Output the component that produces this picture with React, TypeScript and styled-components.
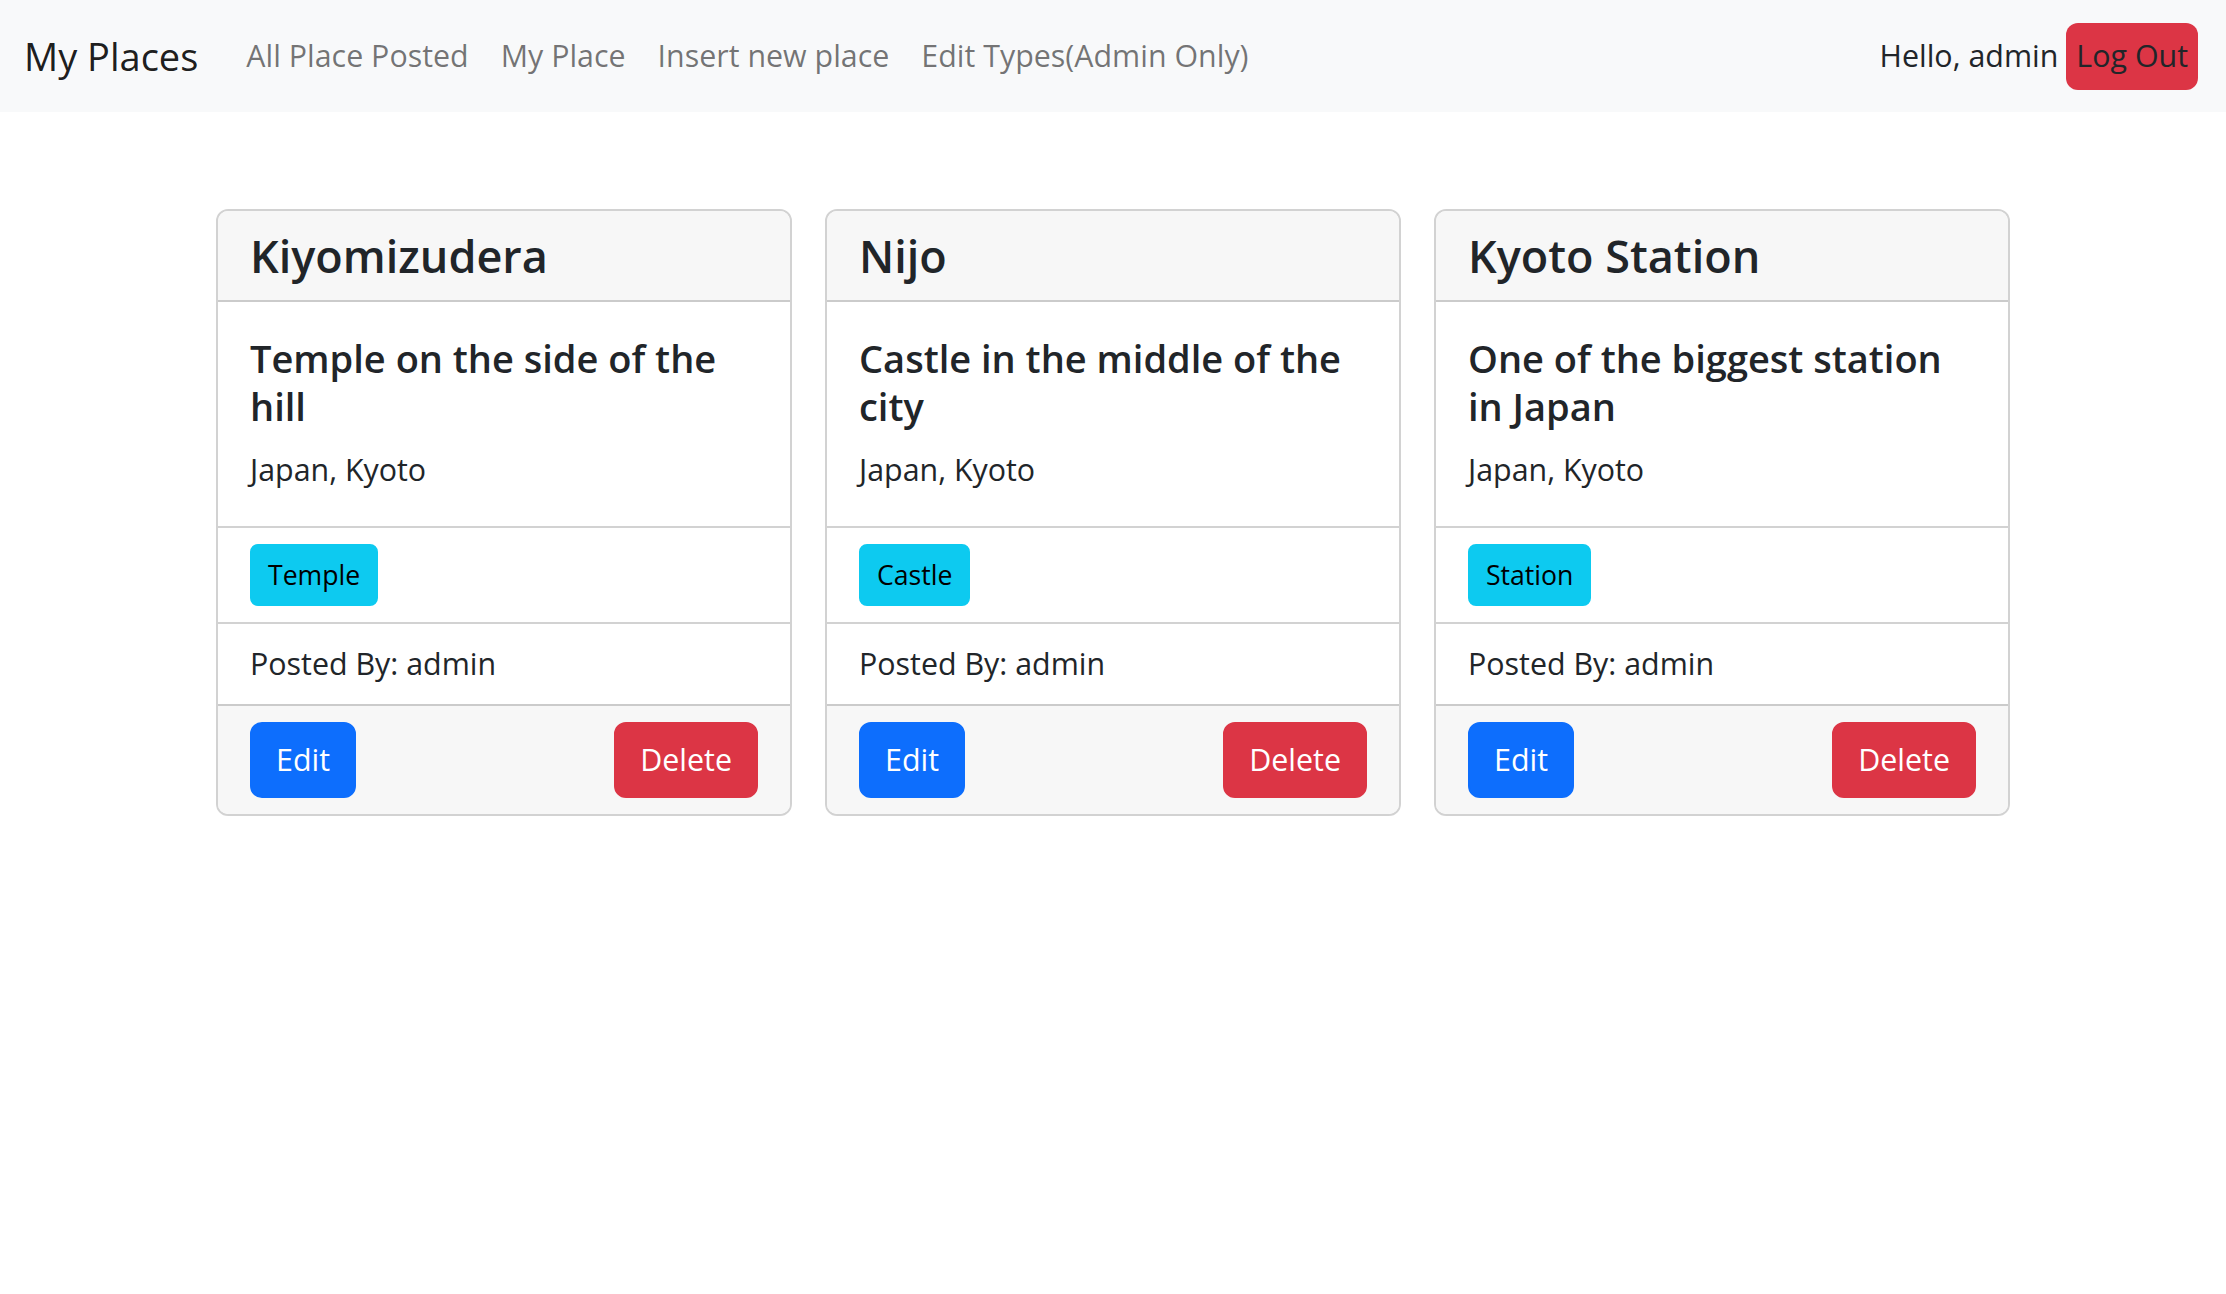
import React from "react";
import styled, { createGlobalStyle } from "styled-components";

const GlobalStyle = createGlobalStyle`
  *, *::before, *::after { box-sizing: border-box; }
  html, body { margin: 0; padding: 0; }
  body {
    font-family: "Open Sans", "Noto Sans", sans-serif;
    font-size: 30.4px;
    line-height: 1.5;
    color: #212529;
    background: #ffffff;
  }
`;

const NavBar = styled.nav`
  height: 112px;
  background: #f8f9fa;
  display: flex;
  align-items: center;
  padding: 0 28px 0 24px;
`;

const Brand = styled.a`
  font-size: 38px;
  line-height: 60px;
  color: rgba(0, 0, 0, 0.9);
  margin-right: 32px;
  text-decoration: none;
  white-space: nowrap;
`;

const NavList = styled.ul`
  display: flex;
  list-style: none;
  margin: 0;
  padding: 0;
  flex: 1;
`;

const NavLink = styled.a`
  display: block;
  padding: 0 16px;
  font-size: 30.4px;
  line-height: 48px;
  color: rgba(0, 0, 0, 0.55);
  text-decoration: none;
  white-space: nowrap;
`;

const UserArea = styled.div`
  display: flex;
  align-items: center;
  gap: 8px;
`;

const Greeting = styled.span`
  font-size: 30.4px;
  line-height: 48px;
  color: #212529;
  white-space: nowrap;
`;

const LogOut = styled.button`
  font-family: inherit;
  font-size: 30.4px;
  line-height: 48px;
  height: 67px;
  padding: 0 10px;
  border: none;
  border-radius: 12px;
  background: #dc3545;
  color: #212529;
  white-space: nowrap;
`;

const CardRow = styled.main`
  display: flex;
  justify-content: center;
  gap: 33px;
  padding-top: 97px;
`;

const Card = styled.section`
  width: 576px;
  border: 2px solid rgba(0, 0, 0, 0.175);
  border-radius: 12px;
  overflow: hidden;
  display: flex;
  flex-direction: column;
`;

const CardHeader = styled.header`
  background: #f7f7f7;
  border-bottom: 2px solid rgba(0, 0, 0, 0.175);
  padding: 16px 32px;
`;

const PlaceName = styled.h4`
  margin: 0;
  font-size: 45px;
  line-height: 57px;
  font-weight: 600;
`;

const CardBody = styled.div`
  padding: 32px;
`;

const CardTitle = styled.h5`
  margin: 0 0 16px;
  font-size: 38px;
  line-height: 48px;
  font-weight: 600;
`;

const CardText = styled.p`
  margin: 0;
  font-size: 30.4px;
  line-height: 48px;
`;

const ListItem = styled.div`
  border-top: 2px solid rgba(0, 0, 0, 0.175);
  padding: 16px 32px;
  font-size: 30.4px;
  line-height: 48px;
`;

const TypeTag = styled.button`
  font-family: inherit;
  font-size: 26.6px;
  line-height: 42px;
  padding: 8px 16px;
  border: 2px solid #0dcaf0;
  border-radius: 8px;
  background: #0dcaf0;
  color: #000;
  display: block;
`;

const CardFooter = styled.footer`
  background: #f7f7f7;
  border-top: 2px solid rgba(0, 0, 0, 0.175);
  padding: 16px 32px;
  display: flex;
  justify-content: space-between;
`;

const ActionButton = styled.button<{ $tone: "primary" | "danger" }>`
  font-family: inherit;
  font-size: 30.4px;
  line-height: 48px;
  padding: 12px 24px;
  border: 2px solid ${(p) => (p.$tone === "primary" ? "#0d6efd" : "#dc3545")};
  background: ${(p) => (p.$tone === "primary" ? "#0d6efd" : "#dc3545")};
  color: #fff;
  border-radius: 12px;
`;

type Place = {
  name: string;
  title: string;
  location: string;
  type: string;
  poster: string;
};

const places: Place[] = [
  {
    name: "Kiyomizudera",
    title: "Temple on the side of the hill",
    location: "Japan, Kyoto",
    type: "Temple",
    poster: "admin",
  },
  {
    name: "Nijo",
    title: "Castle in the middle of the city",
    location: "Japan, Kyoto",
    type: "Castle",
    poster: "admin",
  },
  {
    name: "Kyoto Station",
    title: "One of the biggest station in Japan",
    location: "Japan, Kyoto",
    type: "Station",
    poster: "admin",
  },
];

export default function App() {
  return (
    <>
      <GlobalStyle />
      <NavBar>
        <Brand href="#">My Places</Brand>
        <NavList>
          <li><NavLink href="#">All Place Posted</NavLink></li>
          <li><NavLink href="#">My Place</NavLink></li>
          <li><NavLink href="#">Insert new place</NavLink></li>
          <li><NavLink href="#">Edit Types(Admin Only)</NavLink></li>
        </NavList>
        <UserArea>
          <Greeting>Hello, admin</Greeting>
          <LogOut>Log Out</LogOut>
        </UserArea>
      </NavBar>
      <CardRow>
        {places.map((p) => (
          <Card key={p.name}>
            <CardHeader>
              <PlaceName>{p.name}</PlaceName>
            </CardHeader>
            <CardBody>
              <CardTitle>{p.title}</CardTitle>
              <CardText>{p.location}</CardText>
            </CardBody>
            <ListItem>
              <TypeTag>{p.type}</TypeTag>
            </ListItem>
            <ListItem>Posted By: {p.poster}</ListItem>
            <CardFooter>
              <ActionButton $tone="primary">Edit</ActionButton>
              <ActionButton $tone="danger">Delete</ActionButton>
            </CardFooter>
          </Card>
        ))}
      </CardRow>
    </>
  );
}
